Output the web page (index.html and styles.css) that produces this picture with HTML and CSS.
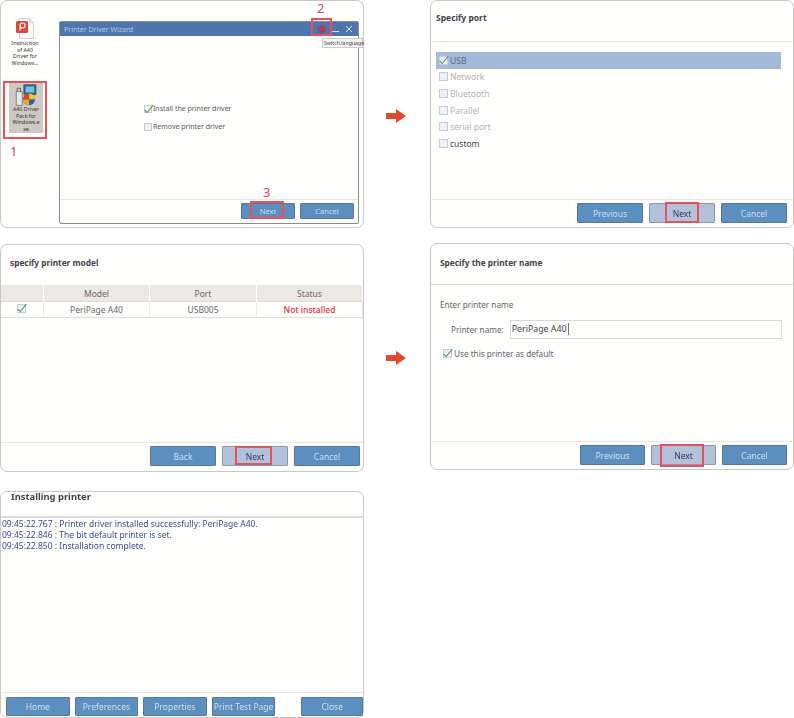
FILE: index.html
```html
<!DOCTYPE html>
<html lang="en">
<head>
    <meta charset="UTF-8">
    <meta name="viewport" content="width=device-width, initial-scale=1.0">
    <title>Printer Driver Installation Steps</title>
    <link rel="stylesheet" href="styles.css">
</head>
<body>
<div class="page">

    <!-- Step 1: run the installer -->
    <section class="panel panel-start">
        <div class="desktop">
            <div class="file file-doc">
                <svg class="ppt-icon" width="18" height="21" viewBox="0 0 18 21">
                    <path d="M3.500.5h10l4 4v16h-14z" fill="#fbfbfb" stroke="#cfcfcf"/>
                    <path d="M13.500.5v4h4" fill="#eee" stroke="#cfcfcf"/>
                    <rect x="0" y="3" width="12" height="12" rx="1.500" fill="#e2453a"/>
                    <circle cx="6.500" cy="7.500" r="2.500" fill="none" stroke="#fff" stroke-width="1.200"/>
                    <path d="M4 8v4.500" stroke="#fff" stroke-width="1.200"/>
                </svg>
                <span>Instruction<br>of A40<br>Driver for<br>Windows...</span>
            </div>
            <div class="file file-selected">
                <svg class="setup-icon" width="23" height="24" viewBox="0 0 26 26">
                    <path d="M1 9h7v16H1z" fill="#e8e8e8" stroke="#777"/>
                    <path d="M2 9V5h4v4" fill="none" stroke="#555"/>
                    <rect x="10" y="1" width="14" height="11" fill="#2c6f9c" stroke="#444"/>
                    <rect x="12" y="3" width="10" height="7" fill="#6fc3e0"/>
                    <circle cx="16" cy="18" r="7" fill="#2a63b8"/>
                    <path d="M16 11a7 7 0 0 1 7 7h-7z" fill="#f5c518"/>
                    <path d="M16 25a7 7 0 0 1-7-7h7z" fill="#f5a318"/>
                    <path d="M9 18a7 7 0 0 1 7-7v7z" fill="#d8452e"/>
                </svg>
                <span>A40 Driver<br>Pack for<br>Windows.e<br>xe</span>
                <i class="mark mark-file"></i>
            </div>
            <b class="step-no step-one">1</b>
        </div>
        <div class="window">
            <div class="titlebar">
                <span class="titlebar-name">Printer Driver Wizard</span>
                <span class="lang-dot"><i class="mark mark-lang"></i><b class="step-no step-two">2</b></span>
                <span class="min-btn"></span>
                <svg width="8" height="8" viewBox="0 0 8 8"><path d="M1 1l6 6M7 1L1 7" stroke="#dbe5f2" stroke-width="1"/></svg>
                <span class="tooltip">Switch language</span>
            </div>
            <div class="window-body">
                <label class="check"><span class="box on"></span>Install the printer driver</label>
                <label class="check"><span class="box"></span>Remove printer driver</label>
            </div>
            <div class="footer footer-small">
                <button class="btn btn-small">Next<i class="mark mark-small"></i><b class="step-no step-three">3</b></button>
                <button class="btn btn-small">Cancel</button>
            </div>
        </div>
    </section>

    <div class="arrow"><svg width="20" height="14" viewBox="0 0 20 14"><path d="M0 4h10V0l10 7-10 7v-4H0z" fill="#df4b2c"/></svg></div>

    <!-- Step 2: port -->
    <section class="panel">
        <h3 class="panel-title title-port">Specify port</h3>
        <div class="panel-body port-list">
            <div class="port port-active"><span class="box on"></span>USB</div>
            <div class="port port-off"><span class="box"></span>Network</div>
            <div class="port port-off"><span class="box"></span>Bluetooth</div>
            <div class="port port-off"><span class="box"></span>Parallel</div>
            <div class="port port-off"><span class="box"></span>serial port</div>
            <div class="port"><span class="box"></span>custom</div>
        </div>
        <div class="footer">
            <button class="btn">Previous</button>
            <button class="btn btn-next">Next<i class="mark"></i></button>
            <button class="btn">Cancel</button>
        </div>
    </section>

    <!-- Step 3: model -->
    <section class="panel panel-model">
        <h3 class="panel-title title-model">specify printer model</h3>
        <div class="panel-body">
            <table class="model-table">
                <tr><th></th><th>Model</th><th>Port</th><th>Status</th></tr>
                <tr><td><span class="box on"></span></td><td>PeriPage A40</td><td>USB005</td><td class="status-bad">Not installed</td></tr>
            </table>
        </div>
        <div class="footer">
            <button class="btn">Back</button>
            <button class="btn btn-next">Next<i class="mark mark-model"></i></button>
            <button class="btn">Cancel</button>
        </div>
    </section>

    <div class="arrow arrow-low"><svg width="20" height="14" viewBox="0 0 20 14"><path d="M0 4h10V0l10 7-10 7v-4H0z" fill="#df4b2c"/></svg></div>

    <!-- Step 4: name -->
    <section class="panel panel-name">
        <h3 class="panel-title title-name">Specify the printer name</h3>
        <div class="panel-body name-body">
            <p class="name-hint">Enter printer name</p>
            <div class="name-row">
                <span>Printer name:</span>
                <div class="name-input"><span class="name-value">PeriPage A40</span></div>
            </div>
            <label class="check name-default"><span class="box on"></span>Use this printer as default</label>
        </div>
        <div class="footer">
            <button class="btn">Previous</button>
            <button class="btn btn-next">Next<i class="mark mark-wide"></i></button>
            <button class="btn">Cancel</button>
        </div>
    </section>

    <!-- Step 5: done -->
    <section class="panel panel-log">
        <h3 class="panel-title title-log">Installing printer</h3>
        <div class="panel-body log">
            <div>09:45:22.767 : Printer driver installed successfully: PeriPage A40.</div>
            <div>09:45:22.846 : The bit default printer is set.</div>
            <div>09:45:22.850 : Installation complete.</div>
        </div>
        <div class="footer footer-log">
            <button class="btn">Home</button>
            <button class="btn">Preferences</button>
            <button class="btn">Properties</button>
            <button class="btn">Print Test Page</button>
            <button class="btn btn-close">Close</button>
        </div>
    </section>

</div>
</body>
</html>
```

FILE: styles.css
```css
/* General */
body {
    margin: 0;
    background: #fff;
    font-family: 'Noto Sans', 'Open Sans', sans-serif;
    font-size: 8.500px;
    color: #555;
}

.page {
    display: grid;
    grid-template-columns: 364px 66px 364px;
    grid-template-rows: 244px 247px 227px;
    width: 794px;
    height: 718px;
    overflow: hidden;
    filter: blur(0.45px);
}

/* Panels */
.panel {
    position: relative;
    display: flex;
    flex-direction: column;
    box-sizing: border-box;
    height: 228px;
    border: 1px solid #c8c8c8;
    border-radius: 7px;
    background: #fefefd;
}

.panel-title {
    box-sizing: border-box;
    height: 41px;
    margin: 0;
    padding: 11px 0 0 5px;
    border-bottom: 1px solid #e3e3e3;
    font-size: 8.500px;
    font-weight: 700;
    color: #45424a;
}

.panel-body {
    flex: 1;
}

.footer {
    display: flex;
    justify-content: flex-end;
    gap: 6px;
    box-sizing: border-box;
    height: 28px;
    padding: 3px 6px 0 0;
    border-top: 1px solid #e6e6e6;
}

/* Buttons */
.btn {
    position: relative;
    box-sizing: border-box;
    width: 66px;
    height: 20px;
    padding: 0;
    border: 1px solid #5a7896;
    border-radius: 1px;
    background: #5a8fc0;
    color: #d3dfee;
    font-family: inherit;
    font-size: 8.500px;
    white-space: nowrap;
}

.btn-next {
    background: #b3c1da;
    border-color: #8b97ad;
    color: #3c3768;
}

.btn-small {
    width: 54px;
    height: 16px;
    font-size: 7.500px;
}

/* Red highlight boxes */
.mark {
    position: absolute;
    top: -2px;
    right: 15px;
    bottom: -1px;
    left: 15px;
    border: 2px solid #e8505a;
}

.mark-model {
    top: -1px;
    right: 15px;
    bottom: 0;
    left: 12px;
}

.mark-wide {
    top: -2px;
    right: 11px;
    bottom: -3px;
    left: 8px;
}

.mark-small {
    top: -3px;
    right: 10px;
    bottom: -1px;
    left: 8px;
}

.mark-file {
    top: -2px;
    right: -4px;
    bottom: -6px;
    left: -6px;
}

.mark-lang {
    top: -7px;
    right: -6px;
    bottom: -3px;
    left: -7px;
}

.step-no {
    position: absolute;
    font-size: 13px;
    font-weight: 400;
    line-height: 13px;
    color: #e5424d;
}

.step-one {
    top: 124px;
    left: 9px;
}

.step-two {
    top: -23px;
    left: -1px;
}

.step-three {
    top: -18px;
    left: 21px;
}

/* Checkboxes */
.box {
    position: relative;
    display: inline-block;
    flex: none;
    box-sizing: border-box;
    width: 9px;
    height: 9px;
    margin-right: 2px;
    border: 1px solid #c5ccd6;
    background: #eef1f5;
}

.box.on::after {
    content: "";
    position: absolute;
    left: 2px;
    top: -3px;
    width: 3px;
    height: 9px;
    border: solid #3f9e45;
    border-width: 0 1.500px 1.500px 0;
    transform: rotate(40deg);
}

.check {
    display: flex;
    align-items: center;
}

/* Step 1 */
.panel-start {
    flex-direction: row;
    padding: 20px 4px 3px 0;
}

.desktop {
    position: relative;
    flex: none;
    width: 58px;
}

.file {
    position: relative;
    display: flex;
    flex-direction: column;
    align-items: center;
    box-sizing: border-box;
    text-align: center;
    font-size: 5.300px;
    line-height: 6.700px;
    color: #333;
}

.file-doc {
    width: 36px;
    margin: -3px 0 0 6px;
}

.file-doc span {
    padding-top: 1px;
}

.file-selected {
    width: 34px;
    height: 50px;
    margin: 16px 0 0 8px;
    padding-top: 1px;
    background: #cdc9c4;
}

.window {
    position: relative;
    display: flex;
    flex: 1;
    flex-direction: column;
    border: 1.500px solid #8d8d8d;
    border-radius: 2px;
}

.titlebar {
    position: relative;
    display: flex;
    flex: none;
    align-items: center;
    height: 14px;
    padding: 0 5px 0 4px;
    background: #4f75ad;
    color: #b9c9df;
    font-size: 7px;
}

.titlebar-name {
    flex: 1;
}

.lang-dot {
    position: relative;
    width: 8px;
    height: 8px;
    margin-right: 6px;
    border-radius: 50%;
    background: #9a4268;
}

.min-btn {
    width: 7px;
    height: 1px;
    margin: 5px 6px 0 0;
    background: #dbe5f2;
}

.tooltip {
    position: absolute;
    top: 16px;
    left: 262px;
    box-sizing: border-box;
    width: 41px;
    height: 10px;
    padding-left: 1px;
    border: 1px solid #ccc;
    background: #f4f4f4;
    color: #444;
    font-size: 5.200px;
    line-height: 8px;
    white-space: nowrap;
}

.window-body {
    display: flex;
    flex: 1;
    flex-direction: column;
    gap: 8px;
    padding: 68px 0 0 84px;
    font-size: 7px;
    line-height: 10px;
    color: #5d5a60;
}

.window-body .box {
    width: 8px;
    height: 8px;
    margin-right: 1px;
}

.footer-small {
    gap: 5px;
    height: 24px;
    padding: 3px 4px 0 0;
}

/* Arrows */
.arrow {
    display: flex;
    justify-content: center;
    box-sizing: content-box;
    height: 14px;
    padding: 109px 2px 0 0;
}

.arrow-low {
    padding-top: 107px;
}

/* Step 2 */
.port-list {
    padding: 10px 12px 0 5px;
}

.port {
    display: flex;
    align-items: center;
    height: 16.600px;
    padding-left: 3px;
    color: #444;
}

.port-active {
    background: #a4bad9;
    color: #5c6d8c;
}

.port-off {
    color: #b5b3b8;
}

/* Step 3 */
.panel-model .footer {
    height: 29px;
    padding-right: 3px;
}

.title-model {
    height: 40px;
    padding: 12px 0 0 9px;
    border-bottom: 0;
    font-size: 8.300px;
}

.model-table {
    width: 100%;
    border-collapse: collapse;
    table-layout: fixed;
    text-align: center;
}

.model-table th {
    height: 16px;
    padding: 0;
    background: #ece8e4;
    border-right: 1px solid #fff;
    font-weight: 400;
    color: #6c6868;
}

.model-table th:first-child,
.model-table td:first-child {
    width: 42px;
}

.model-table th:nth-child(2),
.model-table td:nth-child(2) {
    width: 105px;
}

.model-table th:nth-child(3),
.model-table td:nth-child(3) {
    width: 106px;
}

.model-table td {
    height: 15px;
    padding: 0;
    border-top: 1px solid #e0ddd9;
    border-bottom: 1px solid #e0ddd9;
    border-right: 1px solid #ece8e4;
    color: #6a666c;
}

.status-bad {
    color: #f02c3c !important;
    font-weight: 500;
}

/* Step 4 */
.panel-name {
    height: 227px;
    margin-top: -1px;
}

.panel-name .btn {
    width: 65px;
}

.title-name {
    padding: 13px 0 0 9px;
    border-bottom: 1px solid #d8d8d8;
    font-size: 8.300px;
}

.name-body {
    padding: 14px 11px 0 9px;
    font-size: 8.200px;
    color: #67646a;
}

.name-hint {
    margin: 0;
    line-height: 12px;
}

.name-row {
    display: flex;
    align-items: center;
    gap: 6px;
    margin: 9px 0 0 11px;
}

.name-input {
    flex: 1;
    box-sizing: border-box;
    height: 19px;
    padding-left: 1px;
    border: 1px solid #d8d8d8;
    font-size: 8.800px;
    line-height: 16px;
    color: #45424a;
}

.name-value {
    padding-right: 1px;
    border-right: 1px solid #777;
}

.name-default {
    margin: 9px 0 0 3px;
}

/* Step 5 */
.panel-log {
    height: 227px;
}

.title-log {
    height: 26px;
    padding: 0 0 0 10px;
    border-bottom: 2px solid #dcdcdc;
    font-size: 9.400px;
    line-height: 10px;
}

.log {
    padding: 0 0 0 1px;
    line-height: 11px;
    color: #3c4a94;
}

.footer-log {
    justify-content: flex-start;
    gap: 5px;
    height: 25px;
    padding: 4px 0 0 5px;
}

.footer-log .btn {
    width: 64px;
    height: 19px;
}

.footer-log .btn-close {
    width: 62px;
    margin-left: 21px;
}
```
